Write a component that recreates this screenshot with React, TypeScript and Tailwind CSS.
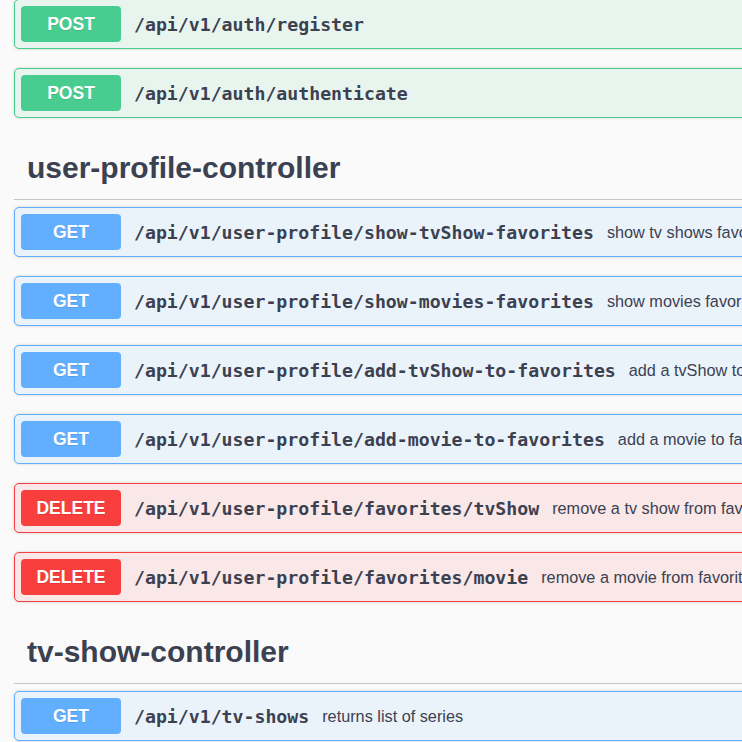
import React from "react";

type Method = "POST" | "GET" | "DELETE";

const methodStyles: Record<Method, { block: string; badge: string }> = {
  POST: { block: "bg-[#e8f5ef] border-[#49cc90]", badge: "bg-[#49cc90]" },
  GET: { block: "bg-[#ebf3fa] border-[#61affe]", badge: "bg-[#61affe]" },
  DELETE: { block: "bg-[#fae7e7] border-[#f93e3e]", badge: "bg-[#f93e3e]" },
};

type Op = { method: Method; path: string; summary?: string };

const sections: { tag?: string; ops: Op[] }[] = [
  {
    ops: [
      { method: "POST", path: "/api/v1/auth/register" },
      { method: "POST", path: "/api/v1/auth/authenticate" },
    ],
  },
  {
    tag: "user-profile-controller",
    ops: [
      { method: "GET", path: "/api/v1/user-profile/show-tvShow-favorites", summary: "show tv shows favorites" },
      { method: "GET", path: "/api/v1/user-profile/show-movies-favorites", summary: "show movies favorites" },
      { method: "GET", path: "/api/v1/user-profile/add-tvShow-to-favorites", summary: "add a tvShow to favorites" },
      { method: "GET", path: "/api/v1/user-profile/add-movie-to-favorites", summary: "add a movie to favorites" },
      { method: "DELETE", path: "/api/v1/user-profile/favorites/tvShow", summary: "remove a tv show from favorites" },
      { method: "DELETE", path: "/api/v1/user-profile/favorites/movie", summary: "remove a movie from favorites" },
    ],
  },
  {
    tag: "tv-show-controller",
    ops: [{ method: "GET", path: "/api/v1/tv-shows", summary: "returns list of series" }],
  },
];

function OpBlock({ op }: { op: Op }) {
  const s = methodStyles[op.method];
  return (
    <div
      className={`flex h-[50px] items-center rounded-[5px] border pl-[6px] shadow-[0_0_3px_rgba(0,0,0,0.19)] ${s.block}`}
    >
      <span
        className={`flex h-[36px] w-[100px] shrink-0 items-center justify-center rounded-[4px] text-[17.5px] font-bold text-white [text-shadow:0_1px_0_rgba(0,0,0,0.1)] ${s.badge}`}
        style={{ fontFamily: '"Liberation Sans", Arial, sans-serif' }}
      >
        {op.method}
      </span>
      <span
        className="ml-[13px] whitespace-nowrap pt-[2px] text-[18.2px] font-bold text-[#3b4151]"
        style={{ fontFamily: '"DejaVu Sans Mono", monospace' }}
      >
        {op.path}
      </span>
      {op.summary && (
        <span
          className="ml-[13px] whitespace-nowrap text-[16.25px] text-[#3b4151]"
          style={{ fontFamily: '"Liberation Sans", Arial, sans-serif' }}
        >
          {op.summary}
        </span>
      )}
    </div>
  );
}

export default function App() {
  return (
    <div className="h-screen w-screen overflow-hidden bg-[#fafafa]">
      <div className="-mt-px w-[1200px] pl-[14px]">
        {sections.map((sec, i) => (
          <div key={i}>
            {sec.tag && (
              <h3
                className="mb-[7px] border-b border-[#c4c6cb] pl-[13px] pt-[32px] pb-[13px] text-[30px] leading-[36px] font-bold text-[#3b4151]"
                style={{ fontFamily: '"Liberation Sans", Arial, sans-serif' }}
              >
                {sec.tag}
              </h3>
            )}
            <div className="flex flex-col gap-[19px]">
              {sec.ops.map((op) => (
                <OpBlock key={op.path} op={op} />
              ))}
            </div>
          </div>
        ))}
      </div>
    </div>
  );
}
